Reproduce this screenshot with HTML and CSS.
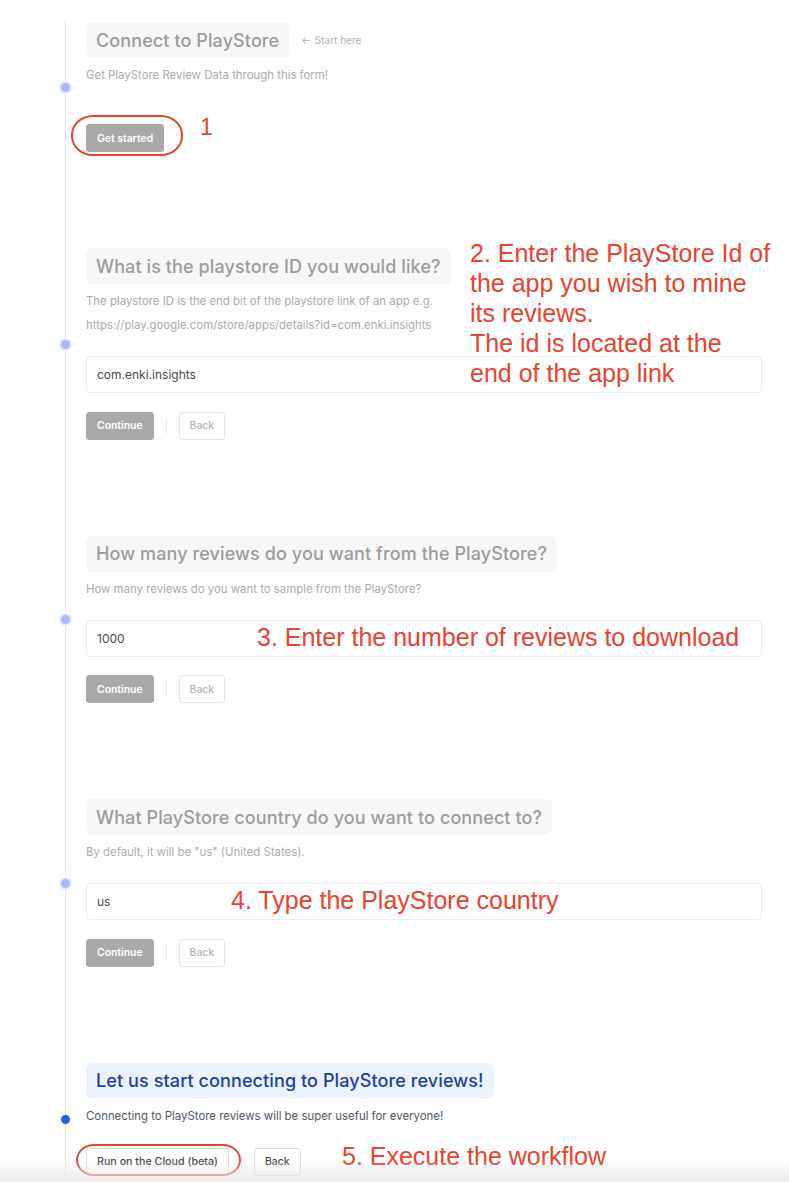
FILE: index.html
```html
<!DOCTYPE html>
<html lang="en">
<head>
<meta charset="utf-8">
<title>Connect to PlayStore</title>
<link rel="stylesheet" href="styles.css">
</head>
<body>
<div class="timeline">

  <section class="step step-first">
    <div class="title-row">
      <h2 class="title">Connect to PlayStore</h2>
      <span class="hint"><span class="hint-arrow">&#8592;</span> Start here</span>
    </div>
    <p class="desc">Get PlayStore Review Data through this form!</p>
    <div class="actions actions-first">
      <button class="btn btn-primary">Get started</button>
    </div>
    <span class="oval oval-1"></span>
    <span class="note note-1">1</span>
  </section>

  <section class="step">
    <div class="title-row">
      <h2 class="title">What is the playstore ID you would like?</h2>
    </div>
    <p class="desc">The playstore ID is the end bit of the playstore link of an app e.g.<br>https://play.google.com/store/apps/details?id=com.enki.insights</p>
    <div class="field">com.enki.insights</div>
    <div class="actions">
      <button class="btn btn-primary">Continue</button>
      <span class="sep"></span>
      <button class="btn btn-ghost">Back</button>
    </div>
    <p class="note note-2">2. Enter the PlayStore Id of<br>the app you wish to mine<br>its reviews.<br>The id is located at the<br>end of the app link</p>
  </section>

  <section class="step">
    <div class="title-row">
      <h2 class="title">How many reviews do you want from the PlayStore?</h2>
    </div>
    <p class="desc">How many reviews do you want to sample from the PlayStore?</p>
    <div class="field">1000</div>
    <div class="actions">
      <button class="btn btn-primary">Continue</button>
      <span class="sep"></span>
      <button class="btn btn-ghost">Back</button>
    </div>
    <p class="note note-3">3. Enter the number of reviews to download</p>
  </section>

  <section class="step">
    <div class="title-row">
      <h2 class="title">What PlayStore country do you want to connect to?</h2>
    </div>
    <p class="desc">By default, it will be "us" (United States).</p>
    <div class="field">us</div>
    <div class="actions">
      <button class="btn btn-primary">Continue</button>
      <span class="sep"></span>
      <button class="btn btn-ghost">Back</button>
    </div>
    <p class="note note-4">4. Type the PlayStore country</p>
  </section>

  <section class="step step-active">
    <div class="title-row">
      <h2 class="title title-active">Let us start connecting to PlayStore reviews!</h2>
    </div>
    <p class="desc desc-active">Connecting to PlayStore reviews will be super useful for everyone!</p>
    <div class="actions">
      <button class="btn btn-outline btn-run">Run on the Cloud (beta)</button>
      <span class="sep"></span>
      <button class="btn btn-outline">Back</button>
    </div>
    <span class="oval oval-5"></span>
    <p class="note note-5">5. Execute the workflow</p>
  </section>

</div>
<div class="bottom-fade"></div>
</body>
</html>
```

FILE: styles.css
```css
* { box-sizing: border-box; }

html, body {
  margin: 0;
  padding: 0;
  background: #ffffff;
}

body {
  font-family: Inter, "Noto Sans", "Liberation Sans", sans-serif;
  color: #444;
  height: 1182px;
  overflow: hidden;
}

.timeline {
  margin: 20px 0 0 65px;
  border-left: 1px solid #e4e7f7;
  padding: 2px 27px 0 20px;
}

.step {
  position: relative;
  margin-bottom: 96px;
}

.step-active {
  margin-bottom: 0;
}

/* timeline dot, centred on the step, sitting over the line */
.step::before {
  content: "";
  position: absolute;
  left: -25px;
  top: 50%;
  width: 9px;
  height: 9px;
  margin-top: -4px;
  border-radius: 50%;
  background: #aab8f8;
  box-shadow: 0 0 0 2px #e6ebfd;
}

.step-active::before {
  background: #2a5ddc;
  box-shadow: none;
}

.title-row {
  display: flex;
  align-items: center;
  gap: 12px;
}

.title {
  margin: 0;
  height: 36px;
  padding: 0 10px;
  display: flex;
  align-items: center;
  background: #f7f7f8;
  border-radius: 6px;
  font-size: 18px;
  font-weight: 500;
  color: #9c9c9c;
  letter-spacing: 0.1px;
  white-space: nowrap;
}

.title-active {
  background: #edf3fd;
  color: #2240a8;
}

.hint {
  font-size: 10px;
  color: #b3b3b3;
  display: inline-flex;
  align-items: center;
  gap: 4px;
}

.desc {
  margin: 5px 0 0;
  font-size: 11.4px;
  line-height: 24px;
  color: #ababab;
}

.desc-active {
  color: #4f5865;
}

.field {
  margin-top: 19px;
  height: 37px;
  border: 1px solid #ededed;
  border-radius: 3px;
  padding: 0 10px;
  display: flex;
  align-items: center;
  font-size: 12px;
  color: #4a4a4a;
}

.actions {
  margin-top: 18.6px;
  display: flex;
  align-items: center;
  gap: 12px;
}

.actions-first {
  margin-top: 37px;
}

.step-active .actions {
  margin-top: 20px;
}

.btn {
  height: 28px;
  border-radius: 3px;
  font-family: inherit;
  font-size: 10.4px;
  padding: 0 10px;
  cursor: pointer;
}

.btn-primary {
  background: #a9a9a9;
  border: 1px solid #a9a9a9;
  color: #ffffff;
  font-weight: 600;
}

.btn-ghost {
  background: #ffffff;
  border: 1px solid #e6e6e6;
  color: #b3b3b3;
  font-weight: 500;
}

.btn-outline {
  background: #ffffff;
  border: 1px solid #dcdcdc;
  color: #4a4a4a;
  font-weight: 500;
}

.btn-run {
  font-size: 10.7px;
}

.sep {
  width: 1px;
  height: 16px;
  background: #ececec;
}

/* annotation overlays */
.note {
  position: absolute;
  margin: 0;
  font-family: "Liberation Sans", Arial, sans-serif;
  font-size: 25px;
  line-height: 30px;
  color: #e8432c;
  white-space: nowrap;
  pointer-events: none;
}

.note-1 { left: 114px; top: 90px; font-size: 23px; }
.note-2 { left: 384px; top: -10px; }
.note-3 { left: 171px; top: 86px; }
.note-4 { left: 145px; top: 86px; }
.note-5 { left: 256px; top: 78px; }

.oval {
  position: absolute;
  border: 2px solid #e8432c;
  border-radius: 22px / 20px;
  pointer-events: none;
}

.oval-1 { left: -15px; top: 93px; width: 112px; height: 41px; }
.oval-5 { left: -10px; top: 81px; width: 165px; height: 32px; border-radius: 18px / 16px; }

.bottom-fade {
  position: fixed;
  left: 0;
  right: 0;
  bottom: 0;
  height: 22px;
  background: linear-gradient(to bottom, rgba(235,235,235,0), rgba(232,232,232,0.9));
  pointer-events: none;
}
```
